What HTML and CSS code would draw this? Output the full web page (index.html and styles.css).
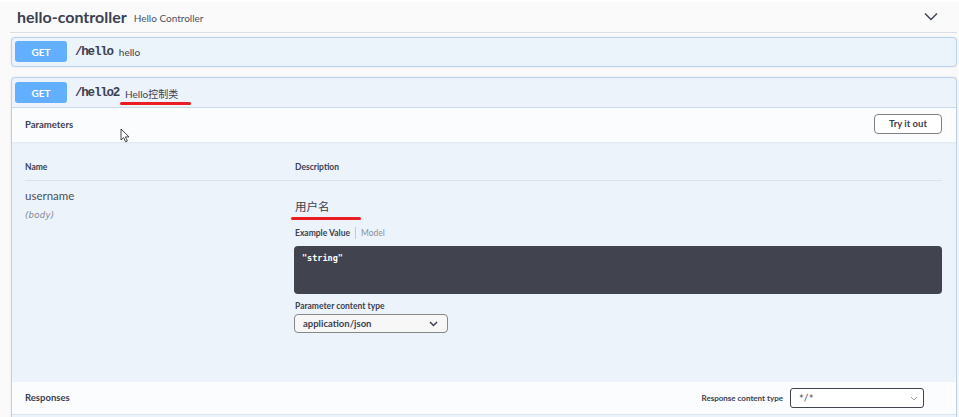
FILE: index.html
```html
<!DOCTYPE html>
<html>
<head>
<meta charset="utf-8">
<link rel="stylesheet" href="styles.css">
</head>
<body>
<div class="page">
  <div class="tag">
    <span class="tag-name">hello-controller</span>
    <span class="tag-desc">Hello Controller</span>
    <svg class="tag-chev" width="14" height="9" viewBox="0 0 14 9"><path d="M1 1.5 L7 7.5 L13 1.5" fill="none" stroke="#3b4151" stroke-width="1.4"/></svg>
  </div>

  <div class="op">
    <div class="op-summary">
      <span class="method">GET</span>
      <span class="path">/hello</span>
      <span class="op-desc">hello</span>
    </div>
  </div>

  <div class="op op-open">
    <div class="op-summary">
      <span class="method">GET</span>
      <span class="path">/hello2</span>
      <span class="op-desc mark mark-a">Hello控制类</span>
    </div>
    <div class="section-head">
      <span class="section-title">Parameters</span>
      <svg class="cursor" width="11" height="15" viewBox="0 0 11 15"><path d="M1 1 L1 12 L3.6 9.6 L5.6 13.8 L7.4 13 L5.4 8.9 L9 8.9 Z" fill="#fff" stroke="#333" stroke-width="0.9" stroke-linejoin="round"/></svg>
      <button class="btn">Try it out</button>
    </div>
    <div class="params">
      <div class="params-head">
        <span class="col-name">Name</span>
        <span class="col-desc">Description</span>
      </div>
      <div class="param-row">
        <div class="col-name">
          <div class="param-name">username</div>
          <div class="param-in">(body)</div>
        </div>
        <div class="col-desc">
          <div class="param-desc"><span class="mark mark-b">用户名</span></div>
          <div class="tabs"><span class="tab tab-active">Example Value</span><span class="tab">Model</span></div>
          <div class="example">"string"</div>
          <div class="label">Parameter content type</div>
          <div class="select">
            <span>application/json</span>
            <svg width="9" height="6" viewBox="0 0 9 6"><path d="M1 1 L4.5 4.5 L8 1" fill="none" stroke="#3b4151" stroke-width="1.5"/></svg>
          </div>
        </div>
      </div>
    </div>
    <div class="section-head resp-head">
      <span class="section-title">Responses</span>
      <div class="resp-ct">
        <span class="resp-label">Response content type</span>
        <div class="select select-dark">
          <span>*/*</span>
          <svg width="8" height="5" viewBox="0 0 8 5"><path d="M1 1 L4 4 L7 1" fill="none" stroke="#9aa0a8" stroke-width="1"/></svg>
        </div>
      </div>
    </div>
  </div>
</div>
</body>
</html>
```

FILE: styles.css
```css
* { box-sizing: border-box; }
html, body { margin: 0; padding: 0; }
body {
  background: #fafafa;
  font-family: Lato, "Noto Sans CJK SC", sans-serif;
  color: #3b4151;
  width: 959px;
  height: 417px;
  overflow: hidden;
}
.page {
  padding: 0 2px 0 10px;
  border-top: 2px solid #ffffff;
}
.tag {
  display: flex;
  align-items: center;
  height: 31px;
  padding: 0 19px 1px 7px;
  border-bottom: 1px solid #dadee4;
}
.tag-name {
  font-size: 16px;
  font-weight: 700;
  color: #3b4151;
}
.tag-desc {
  font-size: 10px;
  color: #4d5361;
  margin-left: 7px;
  margin-top: 2px;
}
.tag-chev { margin-left: auto; }

.op {
  margin: 4px 0 0 1px;
  border: 1px solid #b9d3ee;
  border-radius: 4px;
  background: #ebf3fb;
  box-shadow: 0 0 2px rgba(0,0,0,0.12);
}
.op-open {
  margin-top: 10px;
  border-radius: 4px 4px 0 0;
  background: #edf3fa;
  height: 360px;
}
.op-summary {
  display: flex;
  align-items: center;
  padding: 3px;
  height: 28px;
  border-bottom: 1px solid transparent;
}
.op-open .op-summary {
  height: 30px;
  border-bottom-color: #c7daee;
}
.method {
  width: 52px;
  height: 21px;
  background: #61affe;
  border-radius: 3px;
  color: #fff;
  font-size: 10px;
  font-weight: 700;
  display: flex;
  align-items: center;
  justify-content: center;
}
.path {
  margin-left: 8px;
  font-family: "Liberation Mono", "DejaVu Sans Mono", monospace;
  font-weight: 700;
  font-size: 12.5px;
  letter-spacing: -1.2px;
  color: #3b4151;
}
.op-desc {
  margin-left: 6px;
  font-size: 10px;
  color: #3b4151;
  margin-top: 1px;
}
.mark { position: relative; }
.mark::after {
  content: "";
  position: absolute;
  height: 3px;
  border-radius: 2px;
  background: #ea1d24;
}
.mark-a::after { left: -5px; width: 71px; bottom: -4px; }
.mark-b::after { left: -4px; width: 70px; bottom: -6px; }

.section-head {
  position: relative;
  display: flex;
  align-items: center;
  height: 34px;
  padding: 0 14px 0 13px;
  background: #fafcfe;
  box-shadow: 0 1px 2px rgba(0,0,0,0.06);
}
.section-title {
  font-size: 9.5px;
  font-weight: 700;
  color: #3b4151;
  margin-top: -1px;
}
.cursor { position: absolute; left: 108px; top: 20px; }
.btn {
  margin-left: auto;
  margin-top: -3px;
  width: 68px;
  height: 20px;
  border: 1.5px solid #808080;
  border-radius: 4px;
  background: #fff;
  font-family: Lato, sans-serif;
  font-weight: 700;
  font-size: 9.5px;
  color: #3b4151;
  padding: 0;
}
.params {
  padding: 20px 14px 49px 13px;
  background: #edf3fa;
}
.params-head {
  display: flex;
  font-size: 8.5px;
  font-weight: 700;
  line-height: 10px;
  padding-bottom: 8px;
  border-bottom: 1px solid #dbe2ea;
}
.col-name { width: 270px; flex: none; }
.col-desc { flex: 1; }
.param-row { display: flex; padding-top: 7px; }
.param-name {
  font-size: 11.5px;
  line-height: 16px;
  color: #4a5060;
}
.param-in {
  margin-top: 5px;
  font-size: 8.5px;
  line-height: 12px;
  font-style: italic;
  color: #7d8493;
  font-family: "DejaVu Sans", sans-serif;
  letter-spacing: 0.3px;
}
.param-desc {
  margin-top: 10px;
  font-family: "Noto Sans CJK SC", sans-serif;
  font-size: 11.5px;
  line-height: 16px;
  color: #3b4151;
}
.tabs {
  margin-top: 13px;
  display: flex;
  line-height: 12px;
  font-size: 8.5px;
}
.tab { color: #8a8f99; padding-left: 5px; }
.tab-active {
  color: #3b4151;
  font-weight: 700;
  padding-left: 0;
  padding-right: 5px;
  border-right: 1px solid #c5cad1;
}
.example {
  margin-top: 7px;
  margin-left: -1px;
  height: 48px;
  background: #41444e;
  border-radius: 4px;
  padding: 6px 8px;
  font-family: "DejaVu Sans Mono", monospace;
  font-weight: 700;
  font-size: 8.5px;
  color: #fff;
  line-height: 12px;
}
.label {
  margin-top: 6px;
  font-size: 8.5px;
  font-weight: 700;
  line-height: 12px;
}
.select {
  margin-top: 2px;
  margin-left: -1px;
  width: 154px;
  height: 19px;
  border: 1px solid #888;
  border-radius: 4px;
  background: #f7f7f7;
  display: flex;
  align-items: center;
  justify-content: space-between;
  padding: 0 9px 0 8px;
  font-size: 9.5px;
  font-weight: 700;
  color: #3b4151;
}
.resp-head {
  height: 33px;
  border-bottom: 1px solid #dde5ee;
  box-shadow: none;
}
.resp-ct {
  margin-left: auto;
  display: flex;
  align-items: center;
  margin-right: 18px;
}
.resp-label {
  font-size: 8px;
  font-weight: 700;
  color: #3b4151;
  margin-right: 7px;
}
.select-dark {
  margin: 0;
  width: 134px;
  height: 20px;
  border: 1.5px solid #41444e;
  border-radius: 3px;
  background: #fff;
  font-weight: 400;
  font-family: "DejaVu Sans Mono", monospace;
  font-size: 8px;
  padding: 0 5px 0 8px;
}
```
